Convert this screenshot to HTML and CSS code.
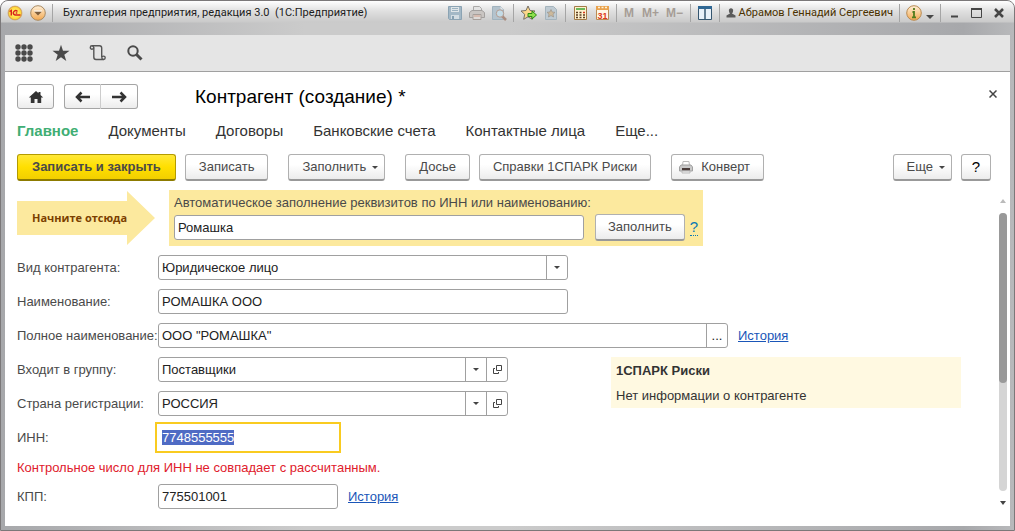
FILE: index.html
```
<!DOCTYPE html>
<html lang="ru">
<head>
<meta charset="UTF-8">
<meta name="viewport" content="width=device-width, initial-scale=1.0">
<title>Контрагент (создание) *</title>
<link rel="stylesheet" href="styles.css">
</head>
<body>

<div class="window">
  <header class="titlebar">
    <svg class="logo" width="16" height="16" viewBox="0 0 16 16">
      <defs>
        <radialGradient id="gold"><stop offset="0.3" stop-color="#fff26a"/><stop offset="0.8" stop-color="#ffd83c"/><stop offset="1" stop-color="#d99a3c"/></radialGradient>
        <linearGradient id="orange" x2="0" y2="1"><stop offset="0" stop-color="#fff0d8"/><stop offset="1" stop-color="#f3a850"/></linearGradient>
      </defs>
      <circle cx="8" cy="8" r="7" fill="url(#gold)" stroke="#c79a5a" stroke-width=".6"/>
      <path d="M2.500 6.500L4.300 5.500v5M10.500 6.500Q8.800 4.800 7.200 6.200T6.800 9.300Q7.500 10.200 9 10H13.500M10.300 8H8.700" fill="none" stroke="#d8211c" stroke-width="1.400"/>
    </svg>
    <button class="tb-btn menu-btn" aria-label="Меню">
      <svg width="16" height="16" viewBox="0 0 16 16"><circle cx="8" cy="8" r="7.300" fill="url(#orange)" stroke="#a98a62"/><path d="M4 6.500h8l-4 4z" fill="#7d5d3c"/><path d="M4 6h8" stroke="#fff" stroke-width="1"/></svg>
    </button>
    <span class="sep"></span>
    <span class="app-title">Бухгалтерия предприятия, редакция 3.0 &nbsp;(1С:Предприятие)</span>

    <div class="tb-tools">
      <button class="tb-btn" aria-label="Сохранить"><svg width="16" height="16" viewBox="0 0 16 16"><path d="M1.500 1.500h13v13h-12l-1-1z" fill="#a3b8c6" stroke="#8ba3b3"/><path d="M4 2h8v5H4z" fill="#dfe5e8"/><path d="M5 3.500h6M5 5.500h6" stroke="#9cb2c0"/><path d="M4 10h8v4H4z" fill="#d3dde3"/><path d="M5 11h2v3H5z" fill="#86a0b1"/></svg></button>
      <button class="tb-btn" aria-label="Печать"><svg width="16" height="16" viewBox="0 0 16 16"><path d="M4.500 6V1.500h6l2 2V6" fill="#e3e3e3" stroke="#aaa9a8"/><path d="M3 5.500h10l2.500 2v5H.5v-5z" fill="#c9c5c2" stroke="#a3a09e"/><path d="M4 9.500h8v5H4z" fill="#dedad7" stroke="#a79f9a"/><path d="M5 11h6" stroke="#cf9c88"/></svg></button>
      <button class="tb-btn" aria-label="Предварительный просмотр"><svg width="16" height="16" viewBox="0 0 16 16"><path d="M1.500 1.500h8l3 3v10h-11z" fill="#b4c3cd" stroke="#a1b3be"/><path d="M9.500 1.500v3h3" fill="#e3e8ea"/><path d="M11 11l4 4" stroke="#a98e80" stroke-width="2.500"/><circle cx="9" cy="8.500" r="3.700" fill="#c4dbe6" stroke="#b49c91"/></svg></button>
      <span class="sep"></span>
      <button class="tb-btn" aria-label="Добавить в избранное"><svg width="17" height="16" viewBox="0 0 17 16"><path d="M8 1l2 4.500 5 .5-3.800 3.300 1 5L8 11.800l-4.300 2.500 1-5L1 6l5-.5z" fill="#fcd789" stroke="#777067"/><path d="M8 8.500h4V6l4.500 4-4.500 4v-2.500H8z" fill="#8ee04c" stroke="#2d8a13"/></svg></button>
      <button class="tb-btn" aria-label="Избранное"><svg width="16" height="16" viewBox="0 0 16 16"><path d="M2.500 1.500h8l3 3v10h-11z" fill="#bfcbd3" stroke="#a5b4bd"/><path d="M8 4.500l1.200 2.500 2.800.3-2 1.900.6 2.800L8 10.600 5.400 12 6 9.200l-2-1.900L6.800 7z" fill="#ccb99b" stroke="#9c958c" stroke-width=".7"/></svg></button>
      <span class="sep"></span>
      <button class="tb-btn" aria-label="Калькулятор"><svg width="16" height="16" viewBox="0 0 16 16"><path d="M2.500 1.500h12v13h-12z" fill="#fff2cf" stroke="#a37b48"/><path d="M4 3h9v2H4z" fill="#6bb85a"/><path d="M4 7.500h2M7.500 7.500h2M4 10h2M7.500 10h2M4 12.500h2M7.500 12.500h2M11 10h2M11 12.500h2" stroke="#5c3c20" stroke-width="1.500"/><path d="M11 7.500h2" stroke="#d63a20" stroke-width="1.500"/></svg></button>
      <button class="tb-btn" aria-label="Календарь"><svg width="16" height="16" viewBox="0 0 16 16"><path d="M2.500 1.500h12v13h-12z" fill="#fff6e6" stroke="#b98b55"/><path d="M2 1h13v4H2z" fill="#e9a24e"/><path d="M4 2.500h2M7.500 2.500h2M11 2.500h2" stroke="#fff2d8" stroke-width="1.500"/><text x="8.500" y="13.500" text-anchor="middle" class="cal-day">31</text></svg></button>
      <span class="sep"></span>
      <button class="tb-btn mem">M</button>
      <button class="tb-btn mem mem-wide">M+</button>
      <button class="tb-btn mem mem-wide">M−</button>
      <span class="sep"></span>
      <button class="tb-btn" aria-label="Панели"><svg width="16" height="16" viewBox="0 0 16 16"><path d="M1.500 2h13v12.500h-13z" fill="#e8f0f8" stroke="#36566f"/><path d="M1 1h14v3H1z" fill="#2f6794"/><path d="M8 4v10" stroke="#36566f" stroke-width="1.500"/></svg></button>
      <span class="sep"></span>
      <button class="tb-btn user"><svg width="10" height="10" viewBox="0 0 10 10"><path d="M3 1.500Q5-1 7 1.500Q7.500 4 6 5.500L9.500 7.500V9.500H.5V7.500L4 5.500Q2.500 4 3 1.500z" fill="#5b5b5b"/></svg>Абрамов Геннадий Сергеевич</button>
      <span class="sep"></span>
      <button class="tb-btn" aria-label="О программе"><svg width="16" height="16" viewBox="0 0 16 16"><circle cx="8" cy="8" r="7.300" fill="url(#orange)" stroke="#b88a52"/><path d="M8 3v2M6.500 7H8v5M6 12.300h4" stroke="#527c1d" stroke-width="1.800" fill="none"/></svg></button>
      <button class="tb-btn info-more" aria-label="Ещё"><svg width="8" height="5" viewBox="0 0 8 5"><path d="M0 1h8L4 5z" fill="#484848"/></svg></button>
      <span class="sep"></span>
      <button class="tb-btn win-btn" aria-label="Свернуть"><svg width="12" height="12" viewBox="0 0 12 12"><path d="M2 9.500h7" stroke="#454545" stroke-width="2"/></svg></button>
      <button class="tb-btn win-btn" aria-label="Развернуть"><svg width="12" height="12" viewBox="0 0 12 12"><path d="M.5 1.500h10v9H.5z" fill="none" stroke="#454545"/><path d="M0 2h11" stroke="#454545" stroke-width="2"/></svg></button>
      <button class="tb-btn win-btn" aria-label="Закрыть окно"><svg width="12" height="12" viewBox="0 0 12 12"><path d="M2 2l8 8M10 2l-8 8" stroke="#454545" stroke-width="2.500"/></svg></button>
    </div>
  </header>

  <div class="client">
    <nav class="sections">
      <button class="section-btn" aria-label="Все функции"><svg width="18" height="18" viewBox="0 0 18 18" fill="#4a4a4a"><circle cx="3" cy="3" r="2.700"/><circle cx="9" cy="3" r="2.700"/><circle cx="15" cy="3" r="2.700"/><circle cx="3" cy="9" r="2.700"/><circle cx="9" cy="9" r="2.700"/><circle cx="15" cy="9" r="2.700"/><circle cx="3" cy="15" r="2.700"/><circle cx="9" cy="15" r="2.700"/><circle cx="15" cy="15" r="2.700"/></svg></button>
      <button class="section-btn" aria-label="Избранное"><svg width="18" height="18" viewBox="0 0 18 18"><path d="M9 .8l2 6h6.500l-5.200 3.900 2 6.300L9 13.200 3.700 17l2-6.300L.5 6.800H7z" fill="#4a4a4a"/></svg></button>
      <button class="section-btn" aria-label="История"><svg width="18" height="18" viewBox="0 0 18 18" fill="none" stroke="#555" stroke-width="1.400"><path d="M4.800 3.500V13Q4.800 15.500 7 15.500H14.500M3 1.800H10.500Q12.700 1.800 12.700 4V13"/><circle cx="3" cy="3.500" r="1.700"/><circle cx="14.500" cy="13.800" r="1.700"/></svg></button>
      <button class="section-btn" aria-label="Поиск"><svg width="18" height="18" viewBox="0 0 18 18" fill="none" stroke="#4a4a4a"><circle cx="7" cy="7" r="4.700" stroke-width="2"/><path d="M10.500 10.500l5 5" stroke-width="3"/></svg></button>
    </nav>

    <main class="page">
      <div class="page-head">
        <button class="btn nav-btn" aria-label="Домой"><svg width="16" height="14" viewBox="0 0 16 14"><path d="M8 1L.8 7.500h2V13h3.700V9h3v4h3.700V7.500h2L12.500 5V2h-2v1.300z" fill="#333"/></svg></button>
        <div class="nav-pair">
          <button class="btn nav-btn" aria-label="Назад"><svg width="16" height="12" viewBox="0 0 16 12"><path d="M15 6H3M6.500 1.500L2 6l4.500 4.500" fill="none" stroke="#333" stroke-width="2.500"/></svg></button>
          <button class="btn nav-btn" aria-label="Вперед"><svg width="16" height="12" viewBox="0 0 16 12"><path d="M1 6h12M9.500 1.500L14 6l-4.500 4.500" fill="none" stroke="#333" stroke-width="2.500"/></svg></button>
        </div>
        <h1>Контрагент (создание) *</h1>
        <button class="close-page" aria-label="Закрыть"><svg width="8" height="8" viewBox="0 0 8 8"><path d="M.5.5l7 7M7.500.5l-7 7" stroke="#444" stroke-width="1.500"/></svg></button>
      </div>

      <nav class="tabs">
        <a href="#" class="active">Главное</a>
        <a href="#">Документы</a>
        <a href="#">Договоры</a>
        <a href="#">Банковские счета</a>
        <a href="#">Контактные лица</a>
        <a href="#">Еще...</a>
      </nav>

      <div class="commands">
        <div class="cmd-group">
          <button class="btn primary">Записать и закрыть</button>
          <button class="btn">Записать</button>
        </div>
        <button class="btn drop">Заполнить<i class="caret"></i></button>
        <div class="cmd-group">
          <button class="btn">Досье</button>
          <button class="btn">Справки 1СПАРК Риски</button>
        </div>
        <button class="btn with-icon"><svg width="14" height="14" viewBox="0 0 14 14"><path d="M3.500 6L4 1.500h6L10.500 6" fill="#fff" stroke="#bbb"/><path d="M2 5h10l1.500 2v4H.5V7z" fill="#c9c9c9" stroke="#a0a0a0"/><path d="M3 8h8v2.500H3z" fill="#4a3c3a"/><path d="M3 11h8v2H3z" fill="#efefef" stroke="#bbb"/></svg>Конверт</button>
        <div class="cmd-group right">
          <button class="btn drop">Еще<i class="caret"></i></button>
          <button class="btn help">?</button>
        </div>
      </div>

      <div class="scroll-area">
        <form class="form">
          <div class="autofill">
            <div class="start-arrow"><span>Начните отсюда</span></div>
            <div class="autofill-box">
              <label for="search">Автоматическое заполнение реквизитов по ИНН или наименованию:</label>
              <div class="autofill-row">
                <input type="text" id="search" class="field w-wide" value="Ромашка">
                <button type="button" class="btn fill">Заполнить</button>
                <a href="#" class="hint">?</a>
              </div>
            </div>
          </div>

          <div class="row">
            <label for="kind">Вид контрагента:</label>
            <div class="combo w-wide">
              <input type="text" id="kind" value="Юридическое лицо">
              <button type="button" aria-label="Выбрать"><i class="caret"></i></button>
            </div>
          </div>
          <div class="row">
            <label for="name">Наименование:</label>
            <input type="text" id="name" class="field w-wide" value="РОМАШКА ООО">
          </div>
          <div class="row">
            <label for="fullname">Полное наименование:</label>
            <div class="combo w-full">
              <input type="text" id="fullname" value='ООО "РОМАШКА"'>
              <button type="button">...</button>
            </div>
            <a href="#" class="history">История</a>
          </div>

          <div class="split">
            <div class="split-fields">
              <div class="row">
                <label for="group">Входит в группу:</label>
                <div class="combo w-mid">
                  <input type="text" id="group" value="Поставщики">
                  <button type="button" aria-label="Выбрать"><i class="caret"></i></button>
                  <button type="button" aria-label="Открыть"><svg width="9" height="9" viewBox="0 0 9 9" fill="none" stroke="#444"><path d="M3.500.5h5v5h-5zM2 3.500H.5v5h5V7"/></svg></button>
                </div>
              </div>
              <div class="row">
                <label for="country">Страна регистрации:</label>
                <div class="combo w-mid">
                  <input type="text" id="country" value="РОССИЯ">
                  <button type="button" aria-label="Выбрать"><i class="caret"></i></button>
                  <button type="button" aria-label="Открыть"><svg width="9" height="9" viewBox="0 0 9 9" fill="none" stroke="#444"><path d="M3.500.5h5v5h-5zM2 3.500H.5v5h5V7"/></svg></button>
                </div>
              </div>
            </div>
            <aside class="spark">
              <h2>1СПАРК Риски</h2>
              <p>Нет информации о контрагенте</p>
            </aside>
          </div>

          <div class="row">
            <label for="inn">ИНН:</label>
            <input type="text" id="inn" class="field w-short" value="7748555555">
          </div>
          <p class="error">Контрольное число для ИНН не совпадает с рассчитанным.</p>
          <div class="row">
            <label for="kpp">КПП:</label>
            <input type="text" id="kpp" class="field w-short" value="775501001">
            <a href="#" class="history">История</a>
          </div>
        </form>

        <div class="scrollbar">
          <i class="scroll-up"></i>
          <div class="track"><div class="thumb"></div></div>
          <i class="scroll-down"></i>
        </div>
      </div>
    </main>
  </div>
</div>

<script>
  const inn = document.getElementById('inn');
  inn.focus();
  inn.select();
</script>

</body>
</html>
```
FILE: styles.css
```
* { box-sizing: border-box; }

body {
  margin: 0;
  font-family: "Liberation Sans", Arial, sans-serif;
  font-size: 13px;
  line-height: 16px;
  color: #4a4a4a;
}

button, input { font: inherit; color: inherit; }
button { cursor: pointer; }
h1, h2, p { margin: 0; }

.window {
  display: flex;
  flex-direction: column;
  min-height: 100vh;
  padding: 0 4px 4px;
  border: 1px solid #7b7879;
  border-radius: 8px 8px 0 0;
  background: linear-gradient(to right, #a7a8ab, #cbcbcb 30%, #cbcbcb 50%, #a7a8ab 95%, #b8b9bb);
}

/* Title bar */
.titlebar {
  display: flex;
  align-items: center;
  height: 34px;
  margin: 0 -4px;
  padding: 0 7px 10px 6px;
  border-radius: 7px 7px 0 0;
  background: linear-gradient(#fff, #e0e0e0 10px, #cacaca 21px, transparent 22px);
  font-family: Roboto, sans-serif;
  font-size: 11px;
  color: #1c1c1c;
}

.tb-btn {
  display: flex;
  align-items: center;
  padding: 0;
  border: none;
  background: none;
}

.menu-btn { margin: 0 6px 0 7px; }
.sep { width: 1px; height: 18px; background: #a5a5a5; flex: none; }
.app-title { margin-left: 10px; white-space: nowrap; }

.tb-tools {
  display: flex;
  align-items: center;
  gap: 6px;
  margin-left: auto;
}

.mem {
  justify-content: center;
  width: 13px;
  font-family: "Liberation Sans", sans-serif;
  font-size: 12px;
  font-weight: bold;
  color: #a69d96;
}
.mem-wide { width: 18px; }
.user { gap: 3px; color: #4b3200; white-space: nowrap; }
.info-more { margin: 6px 0 0 -2px; }
.win-btn { width: 16px; justify-content: center; }
.cal-day { font: bold 9px "Liberation Sans", sans-serif; fill: #dc3a1c; }

/* Client area */
.client {
  flex: 1;
  display: flex;
  flex-direction: column;
  background: #fff;
}

.sections {
  display: flex;
  align-items: center;
  gap: 19px;
  height: 37px;
  padding: 0 10px;
  background: #e5e5e5;
  border-bottom: 1px solid #a0a0a0;
}

.section-btn {
  display: flex;
  padding: 0;
  border: none;
  background: none;
}

.page {
  flex: 1;
  display: flex;
  flex-direction: column;
  padding: 12px 3px 17px 12px;
}

.page-head {
  display: flex;
  align-items: center;
  padding-right: 10px;
}

h1 {
  margin-left: 57px;
  font-size: 19px;
  line-height: 24px;
  font-weight: normal;
  color: #000;
}

.close-page {
  display: flex;
  align-self: flex-start;
  margin: 6px 0 0 auto;
  padding: 0;
  border: none;
  background: none;
}

.btn {
  height: 27px;
  padding: 0 13px;
  border: 1px solid #b0b0b0;
  border-bottom: 2px solid #999;
  border-radius: 3px;
  background: linear-gradient(#fff 40%, #ececec);
  white-space: nowrap;
}

.nav-btn {
  display: flex;
  align-items: center;
  justify-content: center;
  width: 37px;
  height: 25px;
  padding: 0;
  border: 1px solid #a5a5a5;
}

.nav-pair { display: flex; margin-left: 10px; }
.nav-pair .btn:first-child { border-radius: 3px 0 0 3px; border-right-color: #ccc; }
.nav-pair .btn:last-child { border-radius: 0 3px 3px 0; border-left: none; }

.tabs {
  display: flex;
  gap: 30px;
  margin-top: 12px;
  font-size: 15px;
  line-height: 20px;
}
.tabs a { color: #333; text-decoration: none; }
.tabs a.active { color: #40ae74; font-weight: bold; }

.commands {
  display: flex;
  gap: 20px;
  margin-top: 13px;
  padding-right: 16px;
}
.cmd-group { display: flex; gap: 9px; }
.right { margin-left: auto; }

.primary {
  padding: 0 14px;
  border-color: #b39b00;
  border-bottom-color: #8d7b00;
  background: linear-gradient(#ffe838, #ffdf00 50%, #f2cf00);
  font-weight: bold;
}

.caret {
  display: inline-block;
  border: 3px solid transparent;
  border-top-color: #444;
  border-bottom: none;
}
.drop { display: flex; align-items: center; gap: 6px; padding-right: 6px; }
.with-icon { display: flex; align-items: center; gap: 8px; padding-left: 7px; }
.help { width: 30px; padding: 0; font-size: 15px; color: #000; }

.scroll-area {
  flex: 1;
  display: flex;
  gap: 8px;
  margin-top: 9px;
}
.form { flex: 1; }

/* Autofill by INN */
.autofill { display: flex; align-items: center; gap: 14px; margin-bottom: 9px; }

.start-arrow {
  display: flex;
  align-items: center;
  width: 138px;
  height: 54px;
  padding-left: 15px;
  background: #fce99e;
  clip-path: polygon(0 10px, 110px 10px, 110px 0, 100% 50%, 110px 100%, 110px 44px, 0 44px);
  font-family: "Open Sans", sans-serif;
  font-size: 11px;
  font-weight: bold;
  color: #7b3f00;
}

.autofill-box { padding: 5px; background: #fce99e; }
.autofill-box label { display: block; margin-bottom: 3px; }
.autofill-row { display: flex; align-items: center; }
.fill { margin: 0 5px 0 11px; padding: 0 12px; }
.hint { color: #0a78b4; text-decoration: none; border-bottom: 1px dotted; font-size: 15px; }

/* Fields */
.row { display: flex; align-items: center; margin-bottom: 9px; }
.row:last-child { margin-bottom: 0; }
.split-fields .row { margin-bottom: 9px; }
.row label { width: 141px; white-space: nowrap; }

.field, .combo {
  height: 25px;
  border: 1px solid #a0a0a0;
  border-radius: 3px;
  background: #fff;
  color: #222;
}
.field { padding: 0 3px; }
.combo { display: flex; }

.combo input {
  flex: 1;
  min-width: 0;
  padding: 0 3px;
  border: none;
  background: none;
  outline: none;
}

.combo button {
  display: flex;
  align-items: center;
  justify-content: center;
  width: 21px;
  padding: 0;
  border: none;
  border-left: 1px solid #a0a0a0;
  background: none;
}

.field:focus {
  border-color: transparent;
  border-radius: 0;
  outline: 2px solid #f9cb20;
  outline-offset: 1px;
}
::selection { background: #4f6bc4; color: #fff; }

.w-wide { width: 410px; }
.w-full { width: 570px; }
.w-mid { width: 350px; }
.w-short { width: 180px; }

.history { margin-left: 10px; color: #1a56b8; }

.split { display: flex; justify-content: space-between; padding-right: 30px; }

.spark {
  width: 350px;
  height: 51px;
  padding: 6px 5px 4px;
  background: #fff9e1;
  color: #333;
}
.spark h2 { margin-bottom: 9px; font-size: 13px; line-height: 16px; }

.error { margin: 10px 0 8px; color: #e0202c; }

/* Scrollbar */
.scrollbar {
  display: flex;
  flex-direction: column;
  align-items: center;
  gap: 10px;
  width: 8px;
  padding: 9px 0 4px;
}
.track { flex: 1; width: 8px; border-radius: 4px; background: #d5d5d5; }
.thumb { height: 61%; border-radius: 4px; background: #999; }
.scroll-up { border: 3px solid transparent; border-top: none; border-bottom: 4px solid #bbb; }
.scroll-down { border: 3px solid transparent; border-bottom: none; border-top: 4px solid #444; }
```
